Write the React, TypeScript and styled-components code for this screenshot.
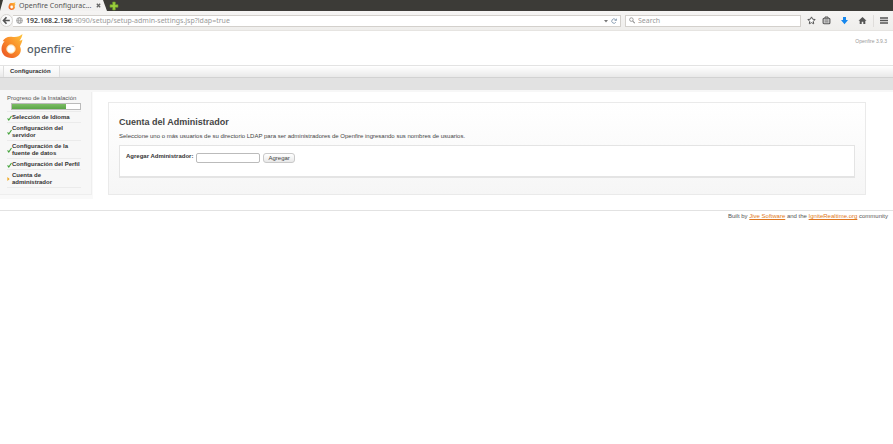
import React from "react";
import styled, { createGlobalStyle } from "styled-components";

const GlobalStyle = createGlobalStyle`
  *, *::before, *::after { box-sizing: border-box; }
  body {
    margin: 0;
    background: #fff;
    color: #444;
    font: 6px/7px "Liberation Sans", Arial, sans-serif;
  }
  h1, p, ol { margin: 0; padding: 0; }
  button, input { font: inherit; color: inherit; margin: 0; }
  svg { display: block; flex: none; }
`;

const uiFont = `"Noto Sans", "Open Sans", sans-serif`;

/* ---------- browser window ---------- */

const TabStrip = styled.div`
  display: flex;
  align-items: center;
  height: 11px;
  background: #3c3b37;
  font: 7px/10px ${uiFont};
`;

const BrowserTab = styled.div`
  display: flex;
  align-items: center;
  gap: 3px;
  width: 107px;
  height: 11px;
  padding: 0 6px 0 8px;
  background: #f2f1f0;
  color: #555;
  clip-path: polygon(3px 0, 103px 0, 107px 100%, 0 100%);
`;

const TabTitle = styled.span`
  flex: 1;
  white-space: nowrap;
`;

const IconButton = styled.button`
  display: grid;
  place-items: center;
  flex: none;
  padding: 0;
  border: 0;
  background: none;
`;

const Toolbar = styled.div`
  display: flex;
  align-items: center;
  height: 20px;
  padding-right: 5px;
  background: linear-gradient(#f5f4f3, #efeeec);
  border-bottom: 1px solid #e6e4e1;
  font: 7px/10px ${uiFont};
`;

const BackButton = styled(IconButton)`
  width: 13px;
  height: 13px;
  border: 1px solid #d5d3d0;
  border-radius: 50%;
  background: #fafafa;
`;

const Field = styled.div<{ $grow: number }>`
  display: flex;
  align-items: center;
  flex: ${(p) => p.$grow} 1 0;
  min-width: 0;
  gap: 3px;
  height: 12px;
  padding: 0 3px;
  background: #fff;
  border: 1px solid #d3d0cc;
`;

const AddressField = styled(Field)`
  border-left: 0;
  margin-right: 4px;
`;

const Address = styled.span`
  flex: 1;
  color: #999;
  white-space: nowrap;

  b { color: #444; font-weight: 600; }
`;

const SearchInput = styled.input`
  flex: 1;
  min-width: 0;
  padding: 0;
  border: 0;
  outline: 0;
  background: none;

  &::placeholder { color: #999; opacity: 1; }
`;

const Tools = styled.div`
  display: flex;
  align-items: center;
  gap: 6px;
  padding-left: 6px;
`;

const Divider = styled.span`
  width: 1px;
  height: 12px;
  background: #dfdddb;
`;

/* ---------- console header ---------- */

const Header = styled.header`
  display: flex;
  justify-content: space-between;
  height: 34px;
  padding: 3px 6px 0 0;
`;

const Brand = styled.a`
  display: flex;
  align-items: flex-start;
  gap: 3px;
  color: #55606a;
  text-decoration: none;
`;

const BrandName = styled.span`
  padding-top: 7px;
  font: 500 11px/16px ${uiFont};
`;

const Trademark = styled.sup`
  font-size: 3px;
  line-height: 0;
`;

const Version = styled.span`
  padding-top: 4px;
  color: #999;
  font-size: 5px;
`;

const Nav = styled.nav`
  display: flex;
  height: 13px;
  padding-left: 3px;
  border-top: 1px solid #e3e3e3;
  border-bottom: 1px solid #d2d2d2;
  background: linear-gradient(#fff, #e9e9e9);
`;

const NavLink = styled.a`
  padding: 0 8px 0 6px;
  border: solid #dedede;
  border-width: 0 1px;
  background: linear-gradient(#fff, #f1f1f1);
  color: #333;
  font-weight: bold;
  line-height: 11px;
  text-decoration: none;
`;

const SubNav = styled.div`
  height: 14px;
  border-bottom: 2px solid #f7f7f7;
  background: #e2e2e2;
`;

/* ---------- body ---------- */

const Body = styled.div`
  display: flex;
  align-items: flex-start;
`;

const Sidebar = styled.aside`
  flex: none;
  width: 93px;
  padding: 0 1px 4px 0;
  background: #f9f9f9;
`;

const SidebarInner = styled.div`
  padding: 2px 10px 6px 7px;
  border: solid #eee;
  border-width: 0 1px 1px 0;
  background: #f7f7f7;
`;

const SidebarTitle = styled.div`
  color: #555;
  line-height: 8px;
  white-space: nowrap;
`;

const Progress = styled.div`
  width: 70px;
  height: 7px;
  margin: 1px 0 1px 4px;
  border: 1px solid #bbb;
  background: #fff;
`;

const ProgressFill = styled.div`
  width: 80%;
  height: 100%;
  background: linear-gradient(#7cbd65, #5ba548);
`;

const Steps = styled.ol`
  list-style: none;
`;

const Step = styled.li`
  display: flex;
  align-items: center;
  padding: 2px 0 1px;
  border-top: 1px solid #ebebeb;
  color: #333;
  font-weight: bold;

  &:last-child { border-bottom: 1px solid #ebebeb; }
`;

const StepText = styled.span`
  white-space: pre;
`;

const Panel = styled.main`
  flex: 1;
  margin: 10px 27px 0 15px;
  padding: 14px 10px 16px;
  border: 1px solid #eaeaea;
  background: linear-gradient(#fff, #f6f6f6);
`;

const Title = styled.h1`
  color: #444;
  font-size: 9px;
  line-height: 10px;
`;

const Intro = styled.p`
  padding: 6px 0 5px;
`;

const AdminForm = styled.form`
  display: flex;
  align-items: flex-start;
  gap: 3px;
  height: 33px;
  padding: 7px 6px;
  border: 1px solid #e4e4e4;
  border-bottom-width: 2px;
  background: #fff;

  label { color: #333; font-weight: bold; }
`;

const AdminInput = styled.input`
  width: 64px;
  height: 10px;
  padding: 0 2px;
  border: 1px solid #bbb;
  border-radius: 2px;
  background: #fff;
`;

const AddButton = styled.button`
  height: 10px;
  padding: 0 4px;
  border: 1px solid #c9c9c9;
  border-radius: 3px;
  background: linear-gradient(#fff, #e8e8e8);
  line-height: 8px;
`;

const Footer = styled.footer`
  margin-top: 11px;
  padding: 2px 5px;
  border-top: 1px solid #e2e2e2;
  color: #555;
  text-align: right;

  a { color: #e07820; }
`;

/* ---------- drawings ---------- */

const Flame = ({ size }: { size: number }) => (
  <svg width={size} height={size} viewBox="0 0 44 48" aria-hidden="true">
    <defs>
      <linearGradient id="flame" x1="1" y1="0" x2="0" y2="1">
        <stop offset="0" stopColor="#ffc63c" />
        <stop offset=".5" stopColor="#f98b2a" />
        <stop offset="1" stopColor="#e94f24" />
      </linearGradient>
    </defs>
    <path
      d="M3 15C7 7 15 4 24 6c8 1 14-2 19-6-1 6-3 10-6 13 3 0 5-1 6-2-1 7-4 10-5 14 2 4 2 8 1 11-3 8-10 12-18 12C9 48 1 40 1 30c0-6 2-11 6-15-2-1-3-1-4 0z"
      fill="url(#flame)"
    />
    <circle cx="20" cy="30" r="8.500" fill="#fff" stroke="#ffd898" strokeWidth="2" />
  </svg>
);

const Check = () => (
  <svg width="5" height="6" viewBox="0 0 5 6" role="img" aria-label="Completado">
    <path d="M.6 3.4 1.8 5 4.5 1" fill="none" stroke="#45a33c" strokeWidth="1.1" />
  </svg>
);

const Current = () => (
  <svg width="5" height="6" viewBox="0 0 5 6" role="img" aria-label="Actual">
    <path d="M.4 1 2.6 3 .4 5z" fill="#f0a820" />
  </svg>
);

const steps = [
  { text: "Selección de Idioma", done: true },
  { text: "Configuración del\nservidor", done: true },
  { text: "Configuración de la\nfuente de datos", done: true },
  { text: "Configuración del Perfil", done: true },
  { text: "Cuenta de\nadministrador", done: false },
];

export default function App() {
  return (
    <>
      <GlobalStyle />
      <TabStrip>
        <BrowserTab>
          <Flame size={8} />
          <TabTitle>Openfire Configurac...</TabTitle>
          <IconButton aria-label="Close tab">
            <svg width="5" height="5" viewBox="0 0 5 5">
              <path d="M.8.8l3.4 3.4M4.2.8.8 4.2" stroke="#666" strokeWidth="1.3" />
            </svg>
          </IconButton>
        </BrowserTab>
        <IconButton aria-label="New tab">
          <svg width="14" height="10" viewBox="0 0 14 10">
            <path d="M5.7 1h2.6v2.7H11v2.6H8.3V9H5.7V6.3H3V3.7h2.7z" fill="#9bd03c" stroke="#6d982a" strokeWidth=".6" />
          </svg>
        </IconButton>
      </TabStrip>

      <Toolbar>
        <BackButton aria-label="Back">
          <svg width="9" height="9" viewBox="0 0 9 9">
            <path d="M4.5 1.2 1.5 4.5 4.5 7.8M1.8 4.5H7.8" fill="none" stroke="#555" strokeWidth="1.7" />
          </svg>
        </BackButton>
        <AddressField $grow={601}>
          <svg width="7" height="7" viewBox="0 0 7 7">
            <g fill="none" stroke="#999" strokeWidth=".7">
              <circle cx="3.5" cy="3.5" r="3" />
              <ellipse cx="3.5" cy="3.5" rx="1.3" ry="3" />
              <path d="M.5 3.5h6M1 1.9h5M1 5.1h5" />
            </g>
          </svg>
          <Address>
            <b>192.168.2.136</b>:9090/setup/setup-admin-settings.jsp?ldap=true
          </Address>
          <IconButton aria-label="History">
            <svg width="4" height="4" viewBox="0 0 4 4">
              <path d="M0 1h4L2 3.5z" fill="#777" />
            </svg>
          </IconButton>
          <IconButton aria-label="Reload">
            <svg width="6" height="6" viewBox="0 0 6 6">
              <path d="M4.8 4.3A2.2 2.2 0 1 1 4.4 1.4" fill="none" stroke="#7f95ab" strokeWidth=".9" />
              <path d="M5.8.2v2.6H3.2z" fill="#7f95ab" />
            </svg>
          </IconButton>
        </AddressField>
        <Field $grow={168}>
          <svg width="6" height="7" viewBox="0 0 6 7">
            <circle cx="2.4" cy="2.6" r="1.8" fill="none" stroke="#888" strokeWidth=".8" />
            <path d="M3.7 4 5.7 6.2" stroke="#888" strokeWidth="1.1" />
          </svg>
          <SearchInput type="search" placeholder="Search" aria-label="Search" />
        </Field>
        <Tools>
          <IconButton aria-label="Bookmark">
            <svg width="9" height="9" viewBox="0 0 9 9">
              <path d="M4.5.9l1.1 2.3 2.5.3-1.8 1.8.4 2.5-2.2-1.2-2.2 1.2.4-2.5L.9 3.5l2.5-.3z" fill="#fff" stroke="#555" strokeWidth="1" />
            </svg>
          </IconButton>
          <IconButton aria-label="Bookmarks menu">
            <svg width="9" height="9" viewBox="0 0 9 9">
              <rect x="1.1" y="2.3" width="6.8" height="5.4" rx="1" fill="#ddd" stroke="#555" strokeWidth="1.1" />
              <path d="M3 2V1h3v1" fill="none" stroke="#555" />
              <path d="M2.5 4h4M2.5 5.9h4" stroke="#555" strokeWidth=".8" />
            </svg>
          </IconButton>
          <IconButton aria-label="Downloads">
            <svg width="15" height="9" viewBox="0 0 15 9">
              <path d="M6 1h3v3h2L7.5 8.2 4 4h2z" fill="#1687ee" />
            </svg>
          </IconButton>
          <IconButton aria-label="Home">
            <svg width="9" height="9" viewBox="0 0 9 9">
              <path d="M4.5 1 8.5 4.7H7.3V8H5.3V5.7H3.7V8H1.7V4.7H.5z" fill="#555" />
            </svg>
          </IconButton>
          <Divider />
          <IconButton aria-label="Menu">
            <svg width="8" height="9" viewBox="0 0 8 9">
              <path d="M0 2h8M0 4.5h8M0 7h8" stroke="#555" strokeWidth="1.5" />
            </svg>
          </IconButton>
        </Tools>
      </Toolbar>

      <Header>
        <Brand href="#">
          <Flame size={24} />
          <BrandName>
            openfire<Trademark>™</Trademark>
          </BrandName>
        </Brand>
        <Version>Openfire 3.9.3</Version>
      </Header>
      <Nav>
        <NavLink href="#">Configuración</NavLink>
      </Nav>
      <SubNav />

      <Body>
        <Sidebar>
          <SidebarInner>
            <SidebarTitle>Progreso de la Instalación</SidebarTitle>
            <Progress role="progressbar" aria-label="Progreso" aria-valuenow={80} aria-valuemin={0} aria-valuemax={100}>
              <ProgressFill />
            </Progress>
            <Steps>
              {steps.map((s) => (
                <Step key={s.text}>
                  {s.done ? <Check /> : <Current />}
                  <StepText>{s.text}</StepText>
                </Step>
              ))}
            </Steps>
          </SidebarInner>
        </Sidebar>
        <Panel>
          <Title>Cuenta del Administrador</Title>
          <Intro>
            Seleccione uno o más usuarios de su directorio LDAP para ser administradores de Openfire ingresando sus
            nombres de usuarios.
          </Intro>
          <AdminForm onSubmit={(e: React.FormEvent) => e.preventDefault()}>
            <label htmlFor="admin">Agregar Administrador:</label>
            <AdminInput id="admin" type="text" />
            <AddButton type="submit">Agregar</AddButton>
          </AdminForm>
        </Panel>
      </Body>
      <Footer>
        Built by <a href="#">Jive Software</a> and the <a href="#">IgniteRealtime.org</a> community
      </Footer>
    </>
  );
}
